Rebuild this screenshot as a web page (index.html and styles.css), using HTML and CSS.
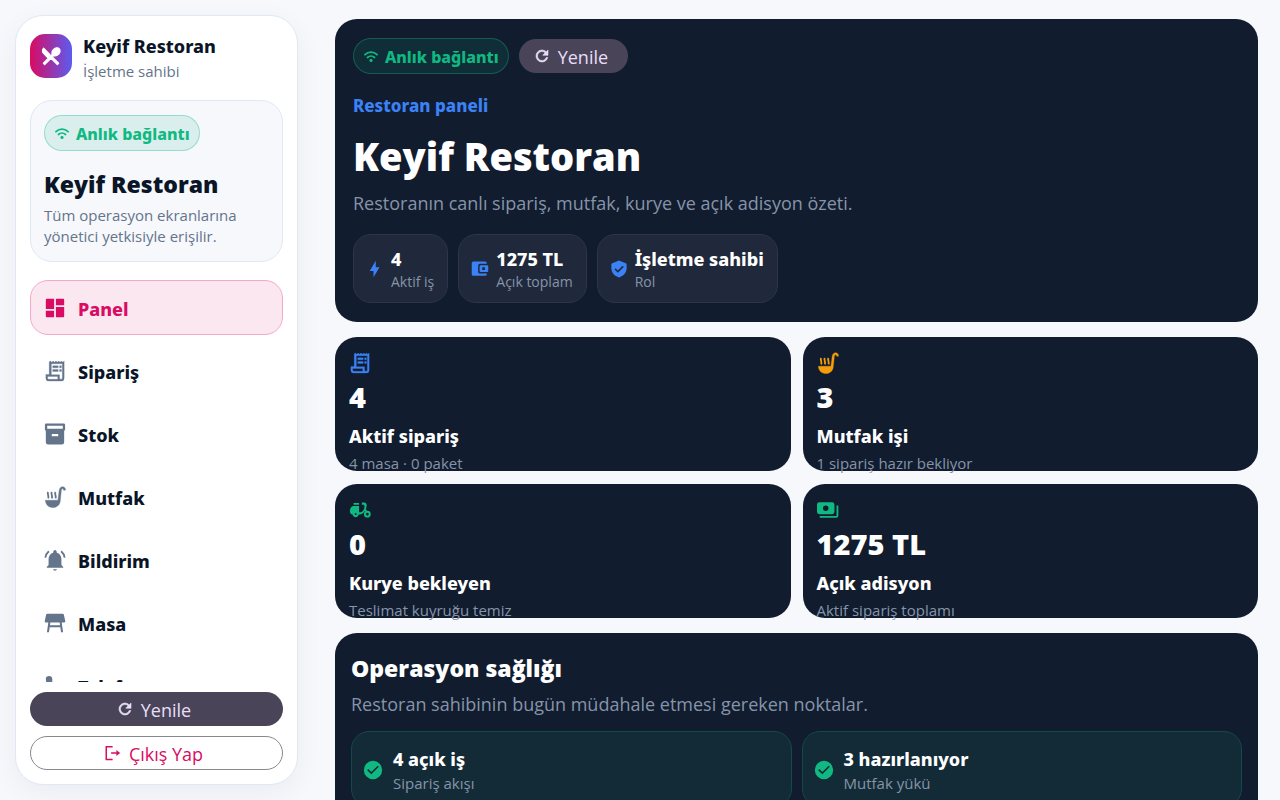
FILE: index.html
```
<!DOCTYPE html>
<html lang="tr">
<head>
<meta charset="utf-8">
<meta name="viewport" content="width=device-width, initial-scale=1">
<title>Keyif Restoran</title>
<link rel="stylesheet" href="styles.css">
</head>
<body>
<svg class="sprite" aria-hidden="true">
  <symbol id="i-cutlery" viewBox="0 0 24 24"><path d="M8.1 13.34L3.91 9.16a4 4 0 0 1 0-5.66L10.93 10.5zM14.88 11.53L13.41 13l6.88 6.88-1.41 1.41L12 14.41l-6.88 6.88-1.41-1.41 9.76-9.76c-.71-1.53-.21-3.68 1.38-5.27 1.91-1.92 4.65-2.28 6.11-.82 1.47 1.47 1.11 4.21-.8 6.12-1.6 1.59-3.75 2.09-5.28 1.38z" stroke="currentColor" stroke-width="1.400" stroke-linejoin="round"/></symbol>
  <symbol id="i-wifi" viewBox="-1 0 26 26"><g fill="none" stroke="currentColor" stroke-width="3" stroke-linecap="round"><path d="M2.2 9.200C7.800 3.800 16.200 3.800 21.800 9.200"/><path d="M6.300 13.800c3.300-3 8.100-3 11.400 0"/></g><circle cx="12" cy="18.500" r="2.600"/></symbol>
  <symbol id="i-dashboard" viewBox="0 0 24 24"><path d="M13 2v7h9V3a1 1 0 0 0-1-1zM13 22h8a1 1 0 0 0 1-1V11h-9zM2 21a1 1 0 0 0 1 1h8v-7H2zM2 13h9V2H3a1 1 0 0 0-1 1z"/></symbol>
  <symbol id="i-receipt" viewBox="0 0 24 24"><path d="M20.5 2.5L19 1l-1.5 1.5L16 1l-1.5 1.5L13 1l-1.5 1.5L10 1 8.500 2.500 7 1 5.700 2v13.700H2v3.800A3.500 3.500 0 0 0 5.500 23h13a3.500 3.500 0 0 0 3.500-3.500V1zM15 21H5.500c-.8 0-1.500-.7-1.500-1.500V18h11zm5-1.500c0 .8-.5 1.500-1.500 1.500S17 20.300 17 19.500V16H8V4h12zM9.500 6.300h6v2.200h-6zM17 6.300h2v2.200h-2zM9.500 10.300h6v2.200h-6zM17 10.300h2v2.200h-2z" stroke="currentColor" stroke-width=".3"/></symbol>
  <symbol id="i-archive" viewBox="0 0 24 24"><path fill-rule="evenodd" d="M2.500 0.500h19A1.500 1.500 0 0 1 23 2v5a1.500 1.500 0 0 1-1 1.400V21a2.500 2.500 0 0 1-2.500 2.500h-15A2.500 2.500 0 0 1 2 21V8.400A1.500 1.500 0 0 1 1 7V2A1.500 1.500 0 0 1 2.500.5zM3.500 3v3.200h17V3zM8.500 12v2.500h7V12z"/></symbol>
  <symbol id="i-ladle" viewBox="0 0 24 24"><path d="M1.500 15.500h13.700L16.600 4.500C17 2 18.400.7 20.300.7S23.500 2 23.500 4.500h-2.200c0-1-.3-1.600-1-1.600s-1.200.7-1.400 1.900L17.700 16.500C17.300 20.500 14 23.500 9.700 23.500s-8-3-8.200-8z" stroke="currentColor" stroke-width=".4"/><path d="M4.500 6.500c-1.500 2.500 1.500 4 0 7M8.500 6.500c-1.500 2.500 1.500 4 0 7M12.500 6.500c-1.500 2.500 1.500 4 0 7" fill="none" stroke="currentColor" stroke-width="2"/></symbol>
  <symbol id="i-bell" viewBox="0 0 24 24"><path d="M21 19.500v1H3v-1l2-2V11c0-3.400 2-6.200 5-7 0-4 4-4 4 0 3 .8 5 3.600 5 7v6.500zM14.200 22a2.300 2.300 0 0 1-4.400 0z"/><path d="M5.300 2.500A11 11 0 0 0 1.500 9.500M18.700 2.500a11 11 0 0 1 3.800 7" fill="none" stroke="currentColor" stroke-width="2"/></symbol>
  <symbol id="i-table" viewBox="0 0 24 24"><path fill-rule="evenodd" d="M23.200 10.200l-1.500-7.100C21.500 2.400 21 2 20.300 2H3.700c-.7 0-1.200.4-1.400 1.100L.8 10.200c-.2.800.3 1.300 1 1.300h2.900L3.200 22h2.200l.8-5.500h11.600l.8 5.500h2.200l-1.500-10.500h2.900c.7 0 1.200-.5 1-1.300zM6.500 14.500l.4-3h10.200l.4 3z"/></symbol>
  <symbol id="i-phone" viewBox="0 0 24 24"><path d="M6.600 10.800a15 15 0 0 0 6.600 6.600l2.200-2.200c.3-.3.700-.4 1-.2 1.100.4 2.300.6 3.600.6.600 0 1 .4 1 1V20c0 .6-.4 1-1 1C10.600 21 2 13.400 2 4c0-2 1.500-3 3.500-3S9 2.200 9 4c0 1.200 0 2.400.1 3.600.1.300 0 .7-.3 1z"/></symbol>
  <symbol id="i-refresh" viewBox="0 0 24 24"><path d="M17.650 6.350A8 8 0 1 0 19.730 14H17.650A6 6 0 1 1 16.220 7.780L13 11h7V4z" stroke="currentColor" stroke-width=".8"/></symbol>
  <symbol id="i-logout" viewBox="0 0 24 24"><path d="M11.500 3.500H3v17h8.500M9.500 12H17" fill="none" stroke="currentColor" stroke-width="2"/><path d="M16.500 8L21.500 12l-5 4z"/></symbol>
  <symbol id="i-bolt" viewBox="0 0 24 24"><path d="M10 14.500H5L13 1v8.500h5L10 23z"/></symbol>
  <symbol id="i-wallet" viewBox="0 0 24 24"><path fill-rule="evenodd" d="M21 18v1a2 2 0 0 1-2 2H3a2 2 0 0 1-2-2V4a2 2 0 0 1 2-2h16a2 2 0 0 1 2 2v1h-9a2.500 2.500 0 0 0-2.500 2.500v8A2.500 2.500 0 0 0 12 18zM13 7h8.500A1.500 1.500 0 0 1 23 8.500v6a1.500 1.500 0 0 1-1.500 1.500H13a1.500 1.500 0 0 1-1.500-1.500v-6A1.500 1.500 0 0 1 13 7zM15 9.700v3.600h3.600V9.700z"/></symbol>
  <symbol id="i-shield" viewBox="0 0 24 24"><path fill-rule="evenodd" d="M12 .8L3 4.200c-.8.300-1.200.8-1.200 1.600V11c0 5.800 4.400 10.700 10.200 12.200C17.800 21.700 22.200 16.800 22.200 11V5.800c0-.8-.4-1.300-1.200-1.600zM10.500 17L6 12.500l1.500-1.500 3 3 6.300-6.300 1.500 1.500z"/></symbol>
  <symbol id="i-moped" viewBox="0 0 24 24"><path fill-rule="evenodd" d="M5 4.300h6v2H5zM4.500 7.500H11v7h1.500c2.300 0 4.400-3.300 4.400-6.500 0-1.200-.4-1.800-1.300-1.800H14V3.700h2.500c1.800 0 2.800 1.200 2.800 3 0 1.600-.4 3.200-1 4.500l1.300 1.300-1.500 1.500-.9-.8c-1.400 2.400-3.200 3.800-5.500 3.800h-1.200c-.5 2-1.600 3-3.200 3s-2.900-1-3.400-3C2 16.500 1 15.300 1 13c0-3 1.300-4.700 3.500-5.500zM6.300 15.500c0 1.400.4 2 1 2s1-.6 1-2z"/><circle cx="20" cy="16.500" r="2.600" fill="none" stroke="currentColor" stroke-width="2.200"/></symbol>
  <symbol id="i-cash" viewBox="0 0 24 24"><path fill-rule="evenodd" d="M19 14V6a2.500 2.500 0 0 0-2.500-2.500h-14A2.500 2.500 0 0 0 0 6v8a2.500 2.500 0 0 0 2.500 2.500h14A2.500 2.500 0 0 0 19 14zM9.500 13a3 3 0 1 1 0-6 3 3 0 0 1 0 6z"/><path d="M3 19.500h18c.8 0 1.300-.5 1.300-1.300V7" fill="none" stroke="currentColor" stroke-width="2"/></symbol>
  <symbol id="i-check" viewBox="0 0 24 24"><path fill-rule="evenodd" d="M12 1a11 11 0 1 1 0 22 11 11 0 0 1 0-22zM10 17.200l9-9-1.400-1.400-7.600 7.600-3.600-3.600L5 12.200z"/></symbol>
</svg>

<div class="shell">
  <aside class="sidebar">
    <div class="brand">
      <span class="brand-mark"><svg class="icon icon-l"><use href="#i-cutlery"/></svg></span>
      <div>
        <div class="brand-name">Keyif Restoran</div>
        <div class="brand-role">İşletme sahibi</div>
      </div>
    </div>

    <section class="profile">
      <span class="pill"><svg class="icon icon-s"><use href="#i-wifi"/></svg><span>Anlık bağlantı</span></span>
      <h2 class="section-title profile-title">Keyif Restoran</h2>
      <p class="profile-text">Tüm operasyon ekranlarına yönetici yetkisiyle erişilir.</p>
    </section>

    <nav class="nav" aria-label="Ana menü">
      <a class="nav-item is-active" href="#panel" aria-current="page"><svg class="icon icon-l"><use href="#i-dashboard"/></svg><span>Panel</span></a>
      <a class="nav-item" href="#siparis"><svg class="icon icon-l"><use href="#i-receipt"/></svg><span>Sipariş</span></a>
      <a class="nav-item" href="#stok"><svg class="icon icon-l"><use href="#i-archive"/></svg><span>Stok</span></a>
      <a class="nav-item" href="#mutfak"><svg class="icon icon-l"><use href="#i-ladle"/></svg><span>Mutfak</span></a>
      <a class="nav-item" href="#bildirim"><svg class="icon icon-l"><use href="#i-bell"/></svg><span>Bildirim</span></a>
      <a class="nav-item" href="#masa"><svg class="icon icon-l"><use href="#i-table"/></svg><span>Masa</span></a>
      <a class="nav-item" href="#telefon"><svg class="icon icon-l"><use href="#i-phone"/></svg><span>Telefon</span></a>
    </nav>

    <div class="sidebar-actions">
      <button class="btn btn-tonal" type="button"><svg class="icon icon-m"><use href="#i-refresh"/></svg><span>Yenile</span></button>
      <button class="btn btn-outline" type="button"><svg class="icon icon-m"><use href="#i-logout"/></svg><span>Çıkış Yap</span></button>
    </div>
  </aside>

  <main class="content" id="panel">
    <section class="hero">
      <div class="hero-top">
        <span class="pill"><svg class="icon icon-s"><use href="#i-wifi"/></svg><span>Anlık bağlantı</span></span>
        <button class="btn btn-tonal" type="button"><svg class="icon icon-m"><use href="#i-refresh"/></svg><span>Yenile</span></button>
      </div>
      <p class="eyebrow">Restoran paneli</p>
      <h1 class="hero-title">Keyif Restoran</h1>
      <p class="lead hero-lead">Restoranın canlı sipariş, mutfak, kurye ve açık adisyon özeti.</p>
      <div class="chips">
        <div class="chip"><svg class="icon icon-m"><use href="#i-bolt"/></svg><div><div class="value">4</div><div class="chip-label">Aktif iş</div></div></div>
        <div class="chip"><svg class="icon icon-m"><use href="#i-wallet"/></svg><div><div class="value">1275 TL</div><div class="chip-label">Açık toplam</div></div></div>
        <div class="chip"><svg class="icon icon-m"><use href="#i-shield"/></svg><div><div class="value">İşletme sahibi</div><div class="chip-label">Rol</div></div></div>
      </div>
    </section>

    <section class="metrics">
      <article class="metric">
        <svg class="icon icon-l blue"><use href="#i-receipt"/></svg>
        <div class="metric-value">4</div><div class="metric-name">Aktif sipariş</div><div class="small">4 masa · 0 paket</div>
      </article>
      <article class="metric">
        <svg class="icon icon-l amber"><use href="#i-ladle"/></svg>
        <div class="metric-value">3</div><div class="metric-name">Mutfak işi</div><div class="small">1 sipariş hazır bekliyor</div>
      </article>
      <article class="metric">
        <svg class="icon icon-l green"><use href="#i-moped"/></svg>
        <div class="metric-value">0</div><div class="metric-name">Kurye bekleyen</div><div class="small">Teslimat kuyruğu temiz</div>
      </article>
      <article class="metric">
        <svg class="icon icon-l green"><use href="#i-cash"/></svg>
        <div class="metric-value">1275 TL</div><div class="metric-name">Açık adisyon</div><div class="small">Aktif sipariş toplamı</div>
      </article>
    </section>

    <section class="health">
      <h2 class="section-title">Operasyon sağlığı</h2>
      <p class="lead health-lead">Restoran sahibinin bugün müdahale etmesi gereken noktalar.</p>
      <div class="health-grid">
        <div class="health-card"><svg class="icon icon-check"><use href="#i-check"/></svg><div><div class="value">4 açık iş</div><div class="small">Sipariş akışı</div></div></div>
        <div class="health-card"><svg class="icon icon-check"><use href="#i-check"/></svg><div><div class="value">3 hazırlanıyor</div><div class="small">Mutfak yükü</div></div></div>
      </div>
    </section>
  </main>
</div>
</body>
</html>
```

FILE: styles.css
```
:root {
  --page: #f6f8fc;
  --ink: #0b1528;
  --muted: #64748b;
  --soft: #8694aa;
  --line: #dfe8f5;
  --dark: #111c2e;
  --green: #10b981;
  --blue: #3b82f6;
  --pink: #d90b62;
}

* { box-sizing: border-box; }

body {
  margin: 0;
  background: var(--page);
  color: var(--ink);
  font-family: "Open Sans", "Noto Sans", sans-serif;
  font-size: 15px;
  line-height: 22px;
}

h1, h2, p { margin: 0; }

.sprite { position: absolute; width: 0; height: 0; }

.icon { display: block; flex: none; fill: currentColor; }
.icon-s { width: 16px; height: 16px; }
.icon-m { width: 18px; height: 18px; }
.icon-l { width: 22px; height: 22px; }
.icon-check { width: 20px; height: 20px; color: var(--green); }
.blue { color: var(--blue); }
.amber { color: #f59e0b; }
.green { color: var(--green); }

.shell { display: flex; height: 100vh; overflow: hidden; }

.brand-name, .nav-item, .eyebrow, .value, .metric-name {
  font-family: "Noto Sans", "Open Sans", sans-serif;
  font-size: 18px;
  font-weight: 800;
}

/* Sidebar */
.sidebar {
  display: flex;
  flex: none;
  flex-direction: column;
  width: 283px;
  margin: 15px 0 15px 15px;
  padding: 14px;
  border: 1px solid var(--line);
  border-radius: 28px;
  background: #fff;
  box-shadow: 0 8px 28px rgba(15, 23, 42, .05);
}

.brand { display: flex; gap: 11px; padding-top: 4px; }
.brand-mark {
  display: grid;
  place-items: center;
  width: 42px;
  height: 44px;
  border-radius: 15px;
  background: linear-gradient(90deg, var(--pink), #5b5cf0);
  color: #fff;
}
.brand-name { line-height: 24px; }
.brand-role { color: var(--muted); line-height: 26px; }

.profile {
  margin: 16px 0 18px;
  padding: 14px 13px;
  border: 1px solid var(--line);
  border-radius: 22px;
  background: var(--page);
}
.pill {
  display: inline-flex;
  align-items: center;
  gap: 6px;
  height: 36px;
  padding: 2px 9px 0;
  border: 1px solid rgba(16, 185, 129, .34);
  border-radius: 18px;
  background: rgba(16, 185, 129, .12);
  color: var(--green);
  font-family: "Noto Sans", "Open Sans", sans-serif;
  font-size: 16px;
  font-weight: 800;
  vertical-align: top;
}
.section-title { font-size: 23px; font-weight: 800; line-height: 30px; }
.profile-title { margin: 18px 0 6px; }
.profile-text { color: var(--muted); line-height: 21px; }

.nav {
  display: flex;
  flex: 1;
  flex-direction: column;
  gap: 8px;
  min-height: 0;
  overflow-y: auto;
  scrollbar-width: none;
}
.nav-item {
  display: flex;
  flex: none;
  align-items: center;
  gap: 12px;
  height: 55px;
  padding: 0 13px;
  border: 1px solid transparent;
  border-radius: 18px;
  color: var(--ink);
  text-decoration: none;
}
.nav-item .icon { color: var(--muted); }
.nav-item span { padding-top: 2px; }
.nav-item.is-active {
  border-color: #f3a9c9;
  background: #fbe7f0;
  color: var(--pink);
}
.nav-item.is-active .icon { color: var(--pink); }

.sidebar-actions { display: grid; gap: 10px; padding-top: 10px; }

.btn {
  display: inline-flex;
  align-items: center;
  justify-content: center;
  gap: 7px;
  height: 34px;
  padding: 0 20px 0 14px;
  border: 0;
  border-radius: 17px;
  font-family: inherit;
  font-size: 18px;
  font-weight: 500;
  line-height: 24px;
}
.btn span { padding-top: 2px; }
.btn-tonal { background: #4a4458; color: #e8def8; }
.btn-outline { border: 1px solid #8a8790; background: #fff; color: var(--pink); }

/* Main column */
.content {
  flex: 1;
  min-width: 0;
  padding: 19px 22px 19px 37px;
  overflow-y: auto;
  scrollbar-width: none;
}

.hero {
  padding: 19px 18px;
  border-radius: 22px;
  background: var(--dark);
  color: #fff;
}
.hero-top { display: flex; align-items: center; gap: 10px; }
.eyebrow {
  margin-top: 20px;
  color: var(--blue);
  font-size: 17px;
  line-height: 24px;
}
.hero-title { margin-top: 15px; font-size: 38px; font-weight: 800; line-height: 46px; }
.lead { color: var(--soft); font-size: 18px; line-height: 26px; }
.hero-lead { margin: 11px 0 18px; }

.chips { display: flex; flex-wrap: wrap; gap: 10px; }
.chip {
  display: flex;
  align-items: center;
  gap: 7px;
  padding: 11px 13px 10px 12px;
  border: 1px solid #2c3648;
  border-radius: 18px;
  background: #20293b;
}
.chip .icon { color: var(--blue); }
.value { color: #fff; line-height: 26px; }
.chip-label { color: var(--soft); font-size: 14px; line-height: 20px; }

.metrics {
  display: grid;
  grid-template-columns: 1fr 1fr;
  gap: 13px 12px;
  margin: 15px 0;
}
/* Fixed tile height: the caption may run past the bottom edge. */
.metric {
  height: 134px;
  padding: 15px 14px;
  border-radius: 22px;
  background: var(--dark);
  color: #fff;
}
.metric-value { margin: 5px 0 8px; font-size: 29px; font-weight: 800; line-height: 36px; }
.metric-name { margin-bottom: 3px; line-height: 26px; }
.small { color: var(--soft); }

.health {
  padding: 20px 16px;
  border-radius: 22px;
  background: var(--dark);
  color: #fff;
}
.health-lead { margin: 8px 0 14px; }
.health-grid { display: grid; grid-template-columns: 1fr 1fr; gap: 10px; }
.health-card {
  display: flex;
  align-items: center;
  gap: 10px;
  padding: 14px 12px 12px 11px;
  border: 1px solid #134a47;
  border-radius: 18px;
  background: #132b36;
}
```
